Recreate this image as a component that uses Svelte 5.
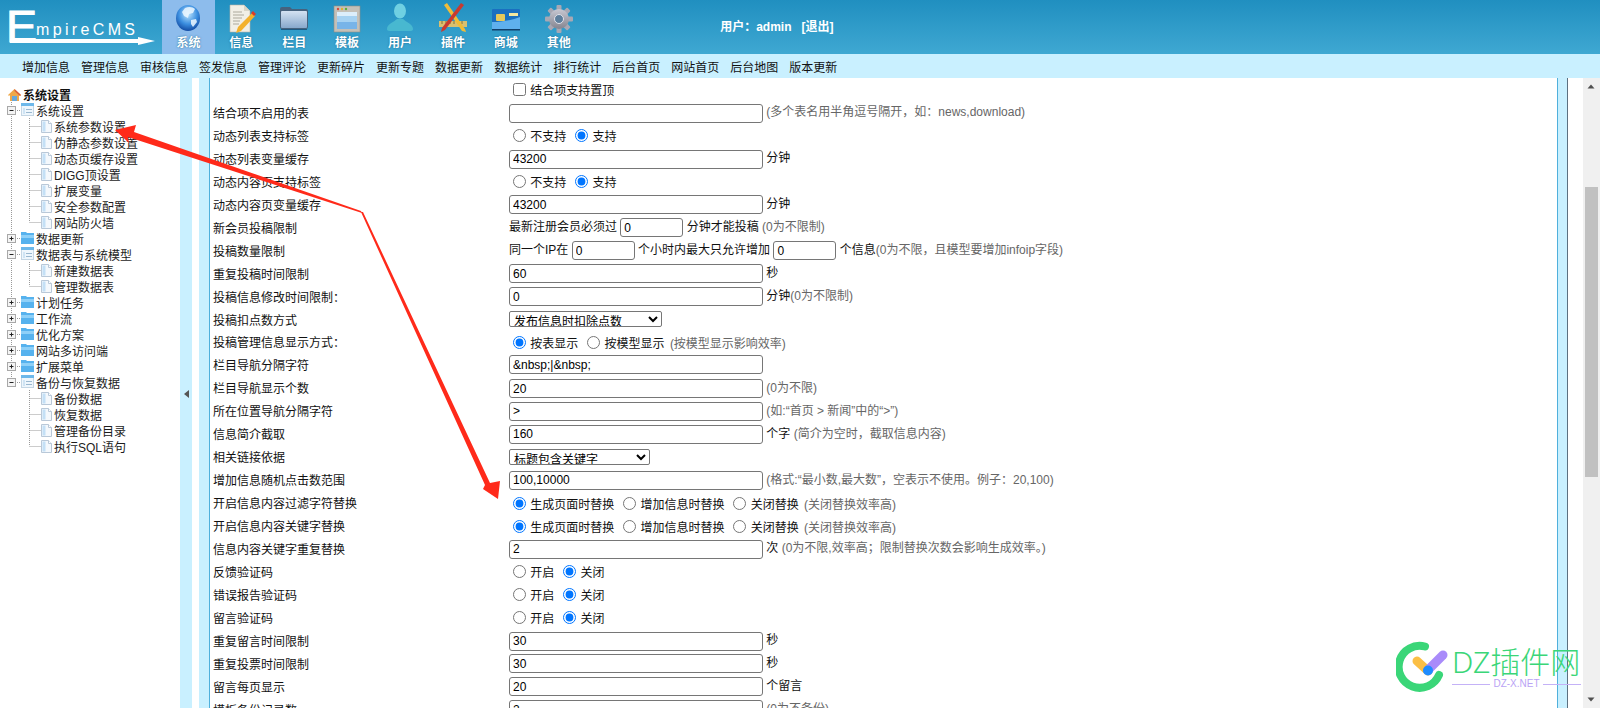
<script>
  const tabs = ["系统", "信息", "栏目", "模板", "用户", "插件", "商城", "其他"];

  const subnav = [
    "增加信息", "管理信息", "审核信息", "签发信息", "管理评论", "更新碎片", "更新专题",
    "数据更新", "数据统计", "排行统计", "后台首页", "网站首页", "后台地图", "版本更新",
  ];

  // tree: open nodes list their children
  const tree = [
    { name: "系统设置", children: ["系统参数设置", "伪静态参数设置", "动态页缓存设置", "DIGG顶设置", "扩展变量", "安全参数配置", "网站防火墙"] },
    { name: "数据更新" },
    { name: "数据表与系统模型", children: ["新建数据表", "管理数据表"] },
    { name: "计划任务" },
    { name: "工作流" },
    { name: "优化方案" },
    { name: "网站多访问端" },
    { name: "扩展菜单" },
    { name: "备份与恢复数据", children: ["备份数据", "恢复数据", "管理备份目录", "执行SQL语句"] },
  ];

  const teeth = [0, 45, 90, 135, 180, 225, 270, 315];

  const inp = (v) => ({ k: "input", v });
  const small = (v) => ({ k: "input", v, small: true });
  const txt = (v) => ({ k: "text", v });
  const hint = (v) => ({ k: "hint", v });
  const sel = (v, w) => ({ k: "select", v, w });
  const on = (v) => ({ k: "radio", v, checked: true });
  const off = (v) => ({ k: "radio", v });

  const rows = [
    { label: "", parts: [{ k: "check", v: "结合项支持置顶" }] },
    { label: "结合项不启用的表", parts: [inp(""), hint("(多个表名用半角逗号隔开，如：news,download)")] },
    { label: "动态列表支持标签", parts: [off("不支持"), on("支持")] },
    { label: "动态列表变量缓存", parts: [inp("43200"), txt("分钟")] },
    { label: "动态内容页支持标签", parts: [off("不支持"), on("支持")] },
    { label: "动态内容页变量缓存", parts: [inp("43200"), txt("分钟")] },
    { label: "新会员投稿限制", parts: [txt("最新注册会员必须过"), small("0"), txt("分钟才能投稿"), hint("(0为不限制)")] },
    { label: "投稿数量限制", parts: [txt("同一个IP在"), small("0"), txt("个小时内最大只允许增加"), small("0"), { k: "text", v: "个信息", tail: "(0为不限，且模型要增加infoip字段)" }] },
    { label: "重复投稿时间限制", parts: [inp("60"), txt("秒")] },
    { label: "投稿信息修改时间限制：", parts: [inp("0"), { k: "text", v: "分钟", tail: "(0为不限制)" }] },
    { label: "投稿扣点数方式", parts: [sel("发布信息时扣除点数", 153)] },
    { label: "投稿管理信息显示方式：", parts: [on("按表显示"), off("按模型显示"), hint("(按模型显示影响效率)")] },
    { label: "栏目导航分隔字符", parts: [inp("&nbsp;|&nbsp;")] },
    { label: "栏目导航显示个数", parts: [inp("20"), hint("(0为不限)")] },
    { label: "所在位置导航分隔字符", parts: [inp(">"), hint("(如:“首页 > 新闻”中的“>”)")] },
    { label: "信息简介截取", parts: [inp("160"), txt("个字"), hint("(简介为空时，截取信息内容)")] },
    { label: "相关链接依据", parts: [sel("标题包含关键字", 141)] },
    { label: "增加信息随机点击数范围", parts: [inp("100,10000"), hint("(格式:“最小数,最大数”，空表示不使用。例子：20,100)")] },
    { label: "开启信息内容过滤字符替换", parts: [on("生成页面时替换"), off("增加信息时替换"), off("关闭替换"), hint("(关闭替换效率高)")] },
    { label: "开启信息内容关键字替换", parts: [on("生成页面时替换"), off("增加信息时替换"), off("关闭替换"), hint("(关闭替换效率高)")] },
    { label: "信息内容关键字重复替换", parts: [inp("2"), txt("次"), hint("(0为不限,效率高；限制替换次数会影响生成效率。)")] },
    { label: "反馈验证码", parts: [off("开启"), on("关闭")] },
    { label: "错误报告验证码", parts: [off("开启"), on("关闭")] },
    { label: "留言验证码", parts: [off("开启"), on("关闭")] },
    { label: "重复留言时间限制", parts: [inp("30"), txt("秒")] },
    { label: "重复投票时间限制", parts: [inp("30"), txt("秒")] },
    { label: "留言每页显示", parts: [inp("20"), txt("个留言")] },
    { label: "模板备份记录数", parts: [inp("2"), hint("(0为不备份)")] },
  ];
</script>

{#snippet pageIcon()}
  <path d="M41.5 2.5h7l3 3v9h-10z" fill="#f4f8fc" stroke="#b9c8d8" />
  <path d="M42.5 3.500h3v10h-3z" fill="#c4e0f6" />
  <path d="M48.500 2.500v3h3" fill="#fff" stroke="#b9c8d8" />
{/snippet}

{#snippet parentGlyph(node, last)}
  <svg class="glyph" width="54" height="16" viewBox="0 0 54 16">
    <path d={last ? "M11.5 0v4" : "M11.5 0v16"} class="dots" />
    <path d="M15 8.5h6" class="dots" />
    <rect x="7.5" y="4.5" width="8" height="8" fill="#f4f4f4" stroke="#a8a8a8" />
    <path d={node.children ? "M9.5 8.5h4" : "M9.5 8.5h4M11.5 6.5v4"} stroke="#222" fill="none" />
    {#if node.children}
      <rect x="21.5" y="1.5" width="12" height="12" fill="#eef6fc" stroke="#c4d6e4" />
      <rect x="21" y="1" width="13" height="3" fill="#6db8ea" />
      <path d="M26 7.5h6M26 10.5h6" stroke="#9ab8d0" />
      <path d="M23 6h2v6h-2z" fill="#cfe4f4" />
    {:else}
      <path d="M21 2h5l1 1h7v11H21z" fill="#56b2ee" />
      <path d="M21 5h13v3H21z" fill="#8ed0f8" />
    {/if}
  </svg>
{/snippet}

{#snippet childGlyph(lastParent, lastChild)}
  <svg class="glyph" width="54" height="16" viewBox="0 0 54 16">
    {#if !lastParent}<path d="M11.5 0v16" class="dots" />{/if}
    <path d={lastChild ? "M29.5 0v8" : "M29.5 0v16"} class="dots" />
    <path d="M29.5 8.5h11" class="dots" />
    {@render pageIcon()}
  </svg>
{/snippet}

<div class="page">
  <header class="top">
    <div class="logo">
      <svg width="162" height="54" viewBox="0 0 162 54">
        <text x="6" y="42" class="logo-e" textLength="31" lengthAdjust="spacingAndGlyphs">E</text>
        <text x="36" y="35" class="logo-rest" textLength="99">mpireCMS</text>
        <path d="M10 39h128v-2l17 4-17 4v-2H10z" fill="#fff" />
      </svg>
    </div>
    <nav class="tabs">
      {#each tabs as tab, i}
        <div class="tab" class:active={i === 0}>
          <svg class="tab-icon" width="32" height="32" viewBox="0 0 32 32">
            {#if i === 0}
              <defs>
                <radialGradient id="globe" cx="0.5" cy="0.35" r="0.7">
                  <stop offset="0" stop-color="#bfe6ff" />
                  <stop offset="0.55" stop-color="#3c8fe0" />
                  <stop offset="1" stop-color="#0b3f98" />
                </radialGradient>
              </defs>
              <ellipse cx="16" cy="17" rx="12" ry="13" fill="url(#globe)" />
              <path d="M13 7c4-2 8-1 10 1l-2 4-4 1-1 4-4-2-2-4zM19 19l5-1 1 3-4 5-2-3z" fill="#eef8ff" opacity=".85" />
            {:else if i === 1}
              <path d="M5 4h14l6 6v21H5z" fill="#f1efe6" stroke="#b8b4a4" stroke-width=".6" />
              <path d="M19 4v6h6z" fill="#d8d5c8" />
              <path d="M8 11h9M8 14h11M8 17h9M8 20h7M8 23h6" stroke="#aca99c" />
              <path d="M27 12l3 3-14 15-5 2 2-6z" fill="#f3b12c" />
              <path d="M26 12l2-2 3 3-2 2z" fill="#d93a2a" />
            {:else if i === 2}
              <defs>
                <linearGradient id="folder" x1="0" y1="0" x2="0" y2="1">
                  <stop offset="0" stop-color="#d4e2f2" />
                  <stop offset="1" stop-color="#88a8cc" />
                </linearGradient>
              </defs>
              <path d="M2 8q0-2 2-2h8l2 2h14q2 0 2 2v16q0 2-2 2H4q-2 0-2-2z" fill="#46627e" />
              <rect x="3" y="10" width="26" height="17" rx="1" fill="url(#folder)" />
              <rect x="3" y="28" width="26" height="1" fill="#1c5a84" />
            {:else if i === 3}
              <rect x="3" y="5" width="26" height="26" fill="#c4c0b8" stroke="#8f8c85" stroke-width=".6" />
              <circle cx="7" cy="8" r="1.2" fill="#d94a3a" />
              <circle cx="11" cy="8" r="1.2" fill="#e0b030" />
              <circle cx="15" cy="8" r="1.2" fill="#5cae3c" />
              <rect x="6" y="11" width="20" height="17" fill="#a6d2f2" />
              <rect x="6" y="11" width="20" height="4" fill="#dceefb" />
              <rect x="6" y="21" width="20" height="7" fill="#78b4e8" />
            {:else if i === 4}
              <ellipse cx="16" cy="10" rx="6" ry="7.500" fill="#6fd0e2" />
              <path d="M3 28c0-5 7-7 10-10h6c3 3 10 5 10 10 0 1-1 2-2 2H5c-1 0-2-1-2-2z" fill="#48b8d0" />
            {:else if i === 5}
              <path d="M2 20h28v6H2z" fill="#d8c070" />
              <path d="M5 20v3M9 20v3M13 20v3M17 20v3M21 20v3M25 20v3" stroke="#84703a" />
              <path d="M7 4l3-2 18 26 1 3-4-1z" fill="#f0bc38" />
              <path d="M24 2l3 2L8 29l-4 2 1-4z" fill="#c83a30" />
            {:else if i === 6}
              <rect x="2" y="8" width="28" height="21" rx="1" fill="#1a6fc0" />
              <path d="M2 21c10 0 20-2 28-5v12a1 1 0 0 1-1 1H3a1 1 0 0 1-1-1z" fill="#5fb0ee" />
              <rect x="6" y="13" width="9" height="7" rx="1" fill="#e6c85a" />
              <rect x="19" y="12" width="9" height="3" fill="#f4e6a0" />
              <rect x="2" y="28" width="28" height="1.5" fill="#10406c" />
            {:else}
              <defs>
                <linearGradient id="gear" x1="0" y1="0" x2="0" y2="1">
                  <stop offset="0" stop-color="#c8c8d2" />
                  <stop offset="1" stop-color="#84848f" />
                </linearGradient>
              </defs>
              {#each teeth as deg}
                <rect x="13.500" y="4" width="5" height="6" rx="1" fill="#a8a8b4" transform="rotate({deg} 16 18)" />
              {/each}
              <circle cx="16" cy="18" r="10" fill="url(#gear)" />
              <circle cx="16" cy="18" r="4.500" fill="#5f7f9c" stroke="#e2e2ea" />
            {/if}
          </svg>
          <span class="tab-label">{tab}</span>
        </div>
      {/each}
    </nav>
    <div class="user">用户：admin &nbsp;&nbsp;[退出]</div>
  </header>

  <div class="subnav">
    {#each subnav as item}
      <span>{item}</span>
    {/each}
  </div>

  <main class="main">
    <aside class="side">
      <div class="side-title">
        <svg width="13" height="13" viewBox="0 0 13 13">
          <path d="M0 7l6.500-6L13 7l-1 1-1-.9V13H2V7.1L1 8z" fill="#f0a848" />
          <path d="M4 8h5v5H4z" fill="#6aa8d8" />
          <path d="M6.500 1L13 7l-1 1-5.500-5z" fill="#d85c3c" />
        </svg>
        <b>系统设置</b>
      </div>
      {#each tree as node, n}
        <div class="tree-row">
          {@render parentGlyph(node, n === tree.length - 1)}
          <span class="name">{node.name}</span>
        </div>
        {#if node.children}
          {#each node.children as child, c}
            <div class="tree-row">
              {@render childGlyph(n === tree.length - 1, c === node.children.length - 1)}
              <span>{child}</span>
            </div>
          {/each}
        {/if}
      {/each}
    </aside>

    <div class="splitter"><i></i></div>
    <div class="gap"></div>
    <div class="edge-left"></div>

    <section class="content">
      {#each rows as row, r}
        <div class="row">
          <div class="label">{row.label}</div>
          <div class="cell">
            {#each row.parts as p}
              {#if p.k === "input"}
                <input class="field" class:small={p.small} type="text" value={p.v} readonly />{" "}
              {:else if p.k === "text"}
                <span>{p.v}</span>{#if p.tail}<span class="hint">{p.tail}</span>{/if}{" "}
              {:else if p.k === "hint"}
                <span class="hint">{p.v}</span>{" "}
              {:else if p.k === "select"}
                <select class="pick" style="width: {p.w}px"><option>{p.v}</option></select>
              {:else if p.k === "radio"}
                <label class="opt"><input class="mark" type="radio" name={"r" + r} checked={p.checked} /> {p.v}</label>{" "}
              {:else if p.k === "check"}
                <label class="opt"><input class="mark" type="checkbox" /> {p.v}</label>
              {/if}
            {/each}
          </div>
        </div>
      {/each}
    </section>

    <div class="edge-right"></div>
    <div class="margin-right"></div>

    <div class="scrollbar">
      <svg class="arrow-btn" width="17" height="17" viewBox="0 0 17 17"><path d="M4.500 10.500L8 6.500l3.500 4z" fill="#505050" /></svg>
      <div class="thumb"></div>
      <svg class="arrow-btn down" width="17" height="17" viewBox="0 0 17 17"><path d="M4.500 6.500L8 10.500l3.500-4z" fill="#505050" /></svg>
    </div>
  </main>

  <!-- annotation drawn over the screenshot -->
  <svg class="annot" width="1600" height="708" viewBox="0 0 1600 708">
    <path d="M115 130L136 125 134 132 361 211 362 213 128 137 129 143z" fill="#ff2a1a" />
    <path d="M361 212L363 212 490 483 500 481 498 499 483 489 485 485z" fill="#ff2a1a" />
  </svg>

  <div class="watermark">
    <svg width="60" height="60" viewBox="0 0 60 60">
      <path d="M29 8.500A21 21 0 1 0 43 37" fill="none" stroke="#3ad678" stroke-width="8" stroke-linecap="round" />
      <path d="M21 23l11 10" stroke="#fbbf45" stroke-width="9" stroke-linecap="round" />
      <path d="M32 32l15-15" stroke="#a98bfa" stroke-width="9" stroke-linecap="round" />
      <circle cx="32" cy="32.500" r="5" fill="#1e8cff" />
    </svg>
    <div class="wm-text">
      <div class="wm-title">DZ插件网</div>
      <div class="wm-sub"><i></i><span>DZ-X.NET</span><i></i></div>
    </div>
  </div>
</div>

<style>
  :global(body) {
    margin: 0;
    overflow: hidden;
    background: #fff;
  }

  .page {
    position: relative;
    width: 1600px;
    height: 708px;
    display: flex;
    flex-direction: column;
    overflow: hidden;
    font-family: "Liberation Sans", "Noto Sans CJK SC", sans-serif;
    font-size: 12px;
    color: #111;
  }

  .top {
    height: 54px;
    display: flex;
    flex: none;
    background: linear-gradient(#208fc0, #3fa8d2);
  }

  .logo {
    width: 162px;
    flex: none;
  }

  .logo svg {
    display: block;
  }

  .logo-e {
    font-family: "Liberation Sans", sans-serif;
    font-size: 45px;
    fill: #fff;
    stroke: #fff;
    stroke-width: 1;
  }

  .logo-rest {
    font-family: "Liberation Sans", sans-serif;
    font-size: 16px;
    fill: #fff;
  }

  .tabs {
    display: flex;
  }

  .tab {
    width: 52.9px;
    height: 54px;
    display: flex;
    flex-direction: column;
    align-items: center;
    padding-top: 1px;
    box-sizing: border-box;
  }

  .tab.active {
    background: #8dbcec;
  }

  .tab-icon {
    display: block;
    flex: none;
  }

  .tab-label {
    color: #fff;
    font-weight: bold;
    font-size: 12px;
    line-height: 16px;
    margin-top: 2px;
    text-shadow: 0 0 2px #1a6a90;
  }

  .user {
    margin-left: 135px;
    line-height: 54px;
    color: #fff;
    font-weight: bold;
  }

  .subnav {
    height: 24px;
    flex: none;
    display: flex;
    gap: 11px;
    padding-left: 22px;
    align-items: center;
    background: #c9f0ff;
    color: #111;
  }

  .main {
    flex: 1;
    display: flex;
    min-height: 0;
  }

  .side {
    width: 180px;
    flex: none;
    padding-top: 8px;
    box-sizing: border-box;
  }

  .side-title {
    height: 16px;
    display: flex;
    align-items: center;
    padding-left: 8px;
    gap: 2px;
  }

  .tree-row {
    height: 16px;
    display: flex;
    align-items: center;
    white-space: nowrap;
    color: #1c1c1c;
  }

  .tree-row .name {
    margin-left: -18px;
  }

  .glyph {
    flex: none;
    display: block;
  }

  .glyph :global(.dots) {
    fill: none;
    stroke: #999;
    stroke-dasharray: 1 1;
  }

  .splitter {
    width: 12px;
    flex: none;
    background: #c9f0ff;
    display: flex;
    align-items: center;
    justify-content: center;
  }

  .splitter i {
    width: 0;
    height: 0;
    border-style: solid;
    border-width: 4px 5px 4px 0;
    border-color: transparent #555 transparent transparent;
    margin-top: 1px;
  }

  .gap {
    width: 7px;
    flex: none;
  }

  .edge-left {
    width: 10px;
    flex: none;
    background: #c9f0ff;
    border-right: 1px solid #4fb0dc;
  }

  .content {
    flex: 1;
    min-width: 0;
    overflow: hidden;
    padding-left: 3px;
  }

  .row {
    height: 22.96px;
    display: flex;
    align-items: center;
    white-space: nowrap;
  }

  .label {
    width: 296px;
    flex: none;
  }

  .cell {
    flex: 1;
  }

  .field {
    box-sizing: border-box;
    width: 254px;
    height: 19px;
    padding: 1px 3px;
    border: 1px solid #767676;
    border-radius: 3px;
    font: 12px "Liberation Sans", "Noto Sans CJK SC", sans-serif;
    color: #000;
    vertical-align: middle;
    outline: none;
  }

  .field.small {
    width: 63px;
  }

  .pick {
    box-sizing: border-box;
    height: 16px;
    padding: 2px 0 0;
    border: 1px solid #767676;
    border-radius: 2px;
    background: #fff;
    font: 12px "Liberation Sans", "Noto Sans CJK SC", sans-serif;
    color: #000;
    vertical-align: middle;
  }

  .hint {
    color: #666;
  }

  .opt + .opt {
    margin-left: 1.5px;
  }

  .opt + .hint {
    margin-left: 2px;
  }

  .mark {
    margin: 3px 1px 0 4px;
    vertical-align: -1px;
  }

  .edge-right {
    width: 9px;
    flex: none;
    background: #c9f0ff;
    border-left: 1px solid #4fb0dc;
    border-right: 1px solid #5c7080;
  }

  .margin-right {
    width: 15px;
    flex: none;
  }

  .scrollbar {
    width: 17px;
    flex: none;
    background: #f0f0f0;
    display: flex;
    flex-direction: column;
  }

  .arrow-btn {
    display: block;
    flex: none;
  }

  .arrow-btn.down {
    margin-top: auto;
  }

  .thumb {
    width: 13px;
    height: 290px;
    margin: 92px 2px 0;
    background: #c1c1c1;
  }

  .annot {
    position: absolute;
    left: 0;
    top: 0;
    pointer-events: none;
  }

  .watermark {
    position: absolute;
    left: 1396px;
    top: 638px;
    display: flex;
    pointer-events: none;
  }

  .watermark svg {
    flex: none;
  }

  .wm-text {
    width: 129px;
    margin: 7px 0 0 -4px;
  }

  .wm-title {
    font-family: "Noto Sans", "Noto Sans CJK SC", sans-serif;
    font-size: 30px;
    line-height: 33px;
    font-weight: 300;
    color: #3ad678;
    white-space: nowrap;
  }

  .wm-sub {
    display: flex;
    align-items: center;
    gap: 3px;
    font-size: 10px;
    line-height: 12px;
    color: #b9a3f5;
  }

  .wm-sub i {
    flex: 1;
    height: 1px;
    background: #c4b2f7;
  }
</style>
